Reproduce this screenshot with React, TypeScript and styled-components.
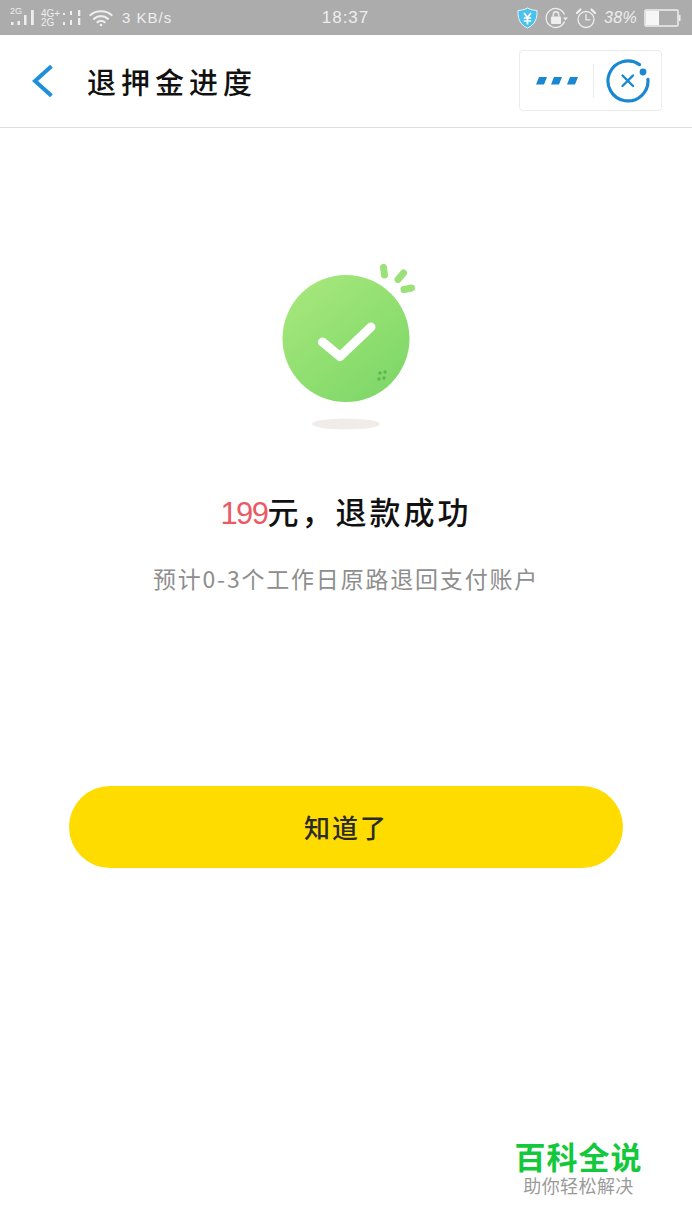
import React from "react";
import styled, { createGlobalStyle } from "styled-components";

const CJK = `"Noto Sans CJK SC", "Noto Sans", sans-serif`;

const Global = createGlobalStyle`
  html, body { margin: 0; padding: 0; background: #fff; }
  body { font-family: ${CJK}; }
`;

const Page = styled.div`
  position: relative;
  width: 692px;
  height: 1230px;
  background: #fff;
  overflow: hidden;
  display: flex;
  flex-direction: column;
`;

const StatusBar = styled.div`
  height: 35px;
  background: #acacac;
  color: #eee;
  display: grid;
  grid-template-columns: 1fr auto 1fr;
  align-items: center;
  padding: 0 11px 0 10px;
  flex: none;
`;

const StatusLeft = styled.div`
  display: flex;
  align-items: center;
  gap: 6px;
  min-width: 0;
`;

const StatusRight = styled.div`
  display: flex;
  align-items: center;
  justify-content: flex-end;
  gap: 7px;
  min-width: 0;
`;

const SignalCell = styled.div`
  position: relative;
  display: flex;
  width: 25px;
  height: 20px;
`;

const CornerLabel = styled.span`
  position: absolute;
  left: 0;
  top: -2px;
  font: 9px/10px "Liberation Sans", sans-serif;
  color: #eee;
`;

const NetStack = styled.div`
  display: flex;
  align-items: center;
  gap: 1px;
`;

const NetLabel = styled.div`
  font: 10px/9px "Liberation Sans", sans-serif;
  width: 20px;
  color: #eee;
`;

const Speed = styled.span`
  margin-left: 3px;
  font-family: "Liberation Sans", sans-serif;
  font-size: 15px;
  letter-spacing: 1px;
  color: #eee;
  white-space: nowrap;
`;

const Clock = styled.span`
  font-family: "Liberation Sans", sans-serif;
  font-size: 17px;
  letter-spacing: 1px;
  color: #eee;
  white-space: nowrap;
`;

const BatteryText = styled.span`
  font-family: "Liberation Sans", sans-serif;
  font-size: 16px;
  font-style: italic;
  letter-spacing: 0.3px;
  color: #eee;
  white-space: nowrap;
`;

const NavBar = styled.div`
  height: 93px;
  flex: none;
  box-sizing: border-box;
  border-bottom: 1px solid #dedede;
  display: flex;
  align-items: center;
  padding: 0 30px 1px 31px;
`;

const BackButton = styled.div`
  width: 24px;
  display: flex;
  align-items: center;
`;

const Title = styled.h1`
  margin: 0 0 0 32px;
  flex: 1;
  font-size: 29px;
  line-height: 40px;
  font-weight: 500;
  letter-spacing: 5px;
  color: #111;
`;

const Capsule = styled.div`
  width: 143px;
  height: 61px;
  box-sizing: border-box;
  border: 1px solid #ececec;
  border-radius: 4px;
  display: flex;
  align-items: center;
`;

const CapsuleCell = styled.div<{ $divider?: boolean }>`
  flex: ${(p) => (p.$divider ? "0 0 73px" : "1")};
  height: 34px;
  display: flex;
  align-items: center;
  justify-content: center;
  border-right: ${(p) => (p.$divider ? "1px solid #ececec" : "none")};
`;

const Main = styled.main`
  flex: 1;
  display: flex;
  flex-direction: column;
  align-items: center;
  padding-top: 131px;
`;

const Illustration = styled.svg`
  display: block;
  width: 180px;
  height: 176px;
  flex: none;
`;

const Heading = styled.h2`
  margin: 54px 0 0;
  font-size: 31px;
  line-height: 44px;
  font-weight: 500;
  letter-spacing: 3px;
  color: #111;
  white-space: nowrap;
`;

const Amount = styled.span`
  color: #ea5a64;
  font-family: "Liberation Sans", sans-serif;
  font-weight: 400;
  font-size: 31px;
  letter-spacing: -1.5px;
`;

const Sub = styled.p`
  margin: 26px 0 0;
  font-size: 23px;
  line-height: 32px;
  letter-spacing: 1.8px;
  color: #8e8e8e;
  white-space: nowrap;
`;

const PrimaryButton = styled.button`
  margin-top: 192px;
  width: 554px;
  height: 82px;
  border: 0;
  border-radius: 41px;
  background: #ffdc00;
  font-family: ${CJK};
  font-size: 26px;
  font-weight: 500;
  letter-spacing: 2px;
  color: #2b2b2b;
  padding: 0 0 2px;
`;

const Watermark = styled.div`
  position: absolute;
  left: 516px;
  top: 1139px;
  width: 125px;
  display: flex;
  flex-direction: column;
  align-items: center;
`;

const WatermarkTitle = styled.div`
  font-size: 31px;
  line-height: 34px;
  font-weight: 700;
  letter-spacing: 1px;
  color: #14c83c;
  white-space: nowrap;
`;

const WatermarkSub = styled.div`
  font-size: 18px;
  line-height: 24px;
  letter-spacing: 0.4px;
  color: #9a9a9a;
  white-space: nowrap;
`;

const SignalOne = () => (
  <svg width="25" height="20" viewBox="0 0 25 20" fill="#eee">
    <rect x="1" y="14" width="2.500" height="3" />
    <rect x="7.500" y="13" width="2.500" height="4" />
    <rect x="14" y="7" width="2.500" height="10" />
    <rect x="21" y="2" width="2.800" height="15" />
  </svg>
);

const SignalTwo = () => (
  <svg width="21" height="20" viewBox="0 0 21 20" fill="#eee">
    <rect x="1" y="5" width="2" height="2" />
    <rect x="1" y="14" width="2" height="3" />
    <rect x="8" y="3" width="2" height="4" />
    <rect x="8" y="12" width="2" height="5" />
    <rect x="16" y="2" width="2.300" height="6" />
    <rect x="16" y="10" width="2.300" height="7" />
  </svg>
);

const Wifi = () => (
  <svg width="24" height="18" viewBox="0 0 24 18" fill="none" stroke="#eee" strokeWidth="2.200" strokeLinecap="round">
    <path d="M1.500 6C7 1 17 1 22.500 6" />
    <path d="M5 9.800C9 6.300 15 6.300 19 9.800" />
    <path d="M8.500 13.200C10.500 11.500 13.500 11.500 15.500 13.200" />
    <circle cx="12" cy="16" r="1.300" fill="#eee" stroke="none" />
  </svg>
);

const Shield = () => (
  <svg width="21" height="22" viewBox="0 0 21 22">
    <path d="M10.500 1C14 3 17 3.200 20 3.500C20.500 11 18 18 10.500 21C3 18 .5 11 1 3.500C4 3.200 7 3 10.500 1Z" fill="#49c3ee" stroke="#e9f6fb" strokeWidth="1" />
    <path d="M7 6L10.500 10.500L14 6M6.800 11H14.200M6.800 14H14.200M10.500 10.500V17.500" fill="none" stroke="#fff" strokeWidth="1.700" />
  </svg>
);

const LockRotate = () => (
  <svg width="23" height="22" viewBox="0 0 23 22" fill="none">
    <path d="M19.500 14.500A9.500 9.500 0 1 1 19.500 7.500" stroke="#eee" strokeWidth="1.300" />
    <rect x="6" y="9.500" width="10" height="7.500" rx="1" fill="#eee" />
    <path d="M8.300 9.500V7.500a2.700 2.700 0 0 1 5.400 0V9.500" stroke="#eee" strokeWidth="1.400" />
    <path d="M18 10.500H23L20.500 13.500Z" fill="#eee" />
  </svg>
);

const Alarm = () => (
  <svg width="22" height="22" viewBox="0 0 22 22" fill="none" stroke="#eee" strokeWidth="1.300" strokeLinecap="round">
    <circle cx="11" cy="12.500" r="8" />
    <path d="M11 7.500V12.800H15" />
    <path d="M2 6L5.500 2.500M20 6L16.500 2.500" strokeWidth="2.200" />
  </svg>
);

const Battery = () => (
  <svg width="37" height="18" viewBox="0 0 37 18">
    <rect x="1" y="1" width="33" height="16" rx="1" fill="none" stroke="#eee" strokeWidth="1.500" />
    <rect x="2" y="2" width="13" height="14" fill="#f6f6f6" />
    <rect x="35" y="6" width="1.500" height="6" fill="#eee" />
  </svg>
);

const Chevron = () => (
  <svg width="22" height="32" viewBox="0 0 22 32" fill="none" stroke="#1f8fdc" strokeWidth="4" strokeLinecap="square">
    <path d="M19 2.500L4 16L19 29.500" />
  </svg>
);

const Dots = () => (
  <svg width="42" height="8" viewBox="0 0 42 8" fill="#1a87d2">
    <path d="M3 0H11L8 7.500H0Z" />
    <path d="M18 0H26L23 7.500H15Z" />
    <path d="M34 0H42L39 7.500H31Z" />
  </svg>
);

const CloseMini = () => (
  <svg width="44" height="44" viewBox="0 0 44 44" fill="none" stroke="#1a87d2" strokeLinecap="round">
    <path d="M33.500 5.600A20 20 0 1 0 41.900 20.300" strokeWidth="3.200" />
    <circle cx="37" cy="13" r="3.400" fill="#1a87d2" stroke="none" />
    <path d="M16.500 16.500L27 27M27 16.500L16.500 27" strokeWidth="2.400" />
  </svg>
);

export default function App() {
  return (
    <Page>
      <Global />
      <StatusBar>
        <StatusLeft>
          <SignalCell>
            <CornerLabel>2G</CornerLabel>
            <SignalOne />
          </SignalCell>
          <NetStack>
            <NetLabel>4G+<br />2G</NetLabel>
            <SignalTwo />
          </NetStack>
          <Wifi />
          <Speed>3 KB/s</Speed>
        </StatusLeft>
        <Clock>18:37</Clock>
        <StatusRight>
          <Shield />
          <LockRotate />
          <Alarm />
          <BatteryText>38%</BatteryText>
          <Battery />
        </StatusRight>
      </StatusBar>
      <NavBar>
        <BackButton><Chevron /></BackButton>
        <Title>退押金进度</Title>
        <Capsule>
          <CapsuleCell $divider><Dots /></CapsuleCell>
          <CapsuleCell><CloseMini /></CapsuleCell>
        </Capsule>
      </NavBar>
      <Main>
        <Illustration viewBox="-4 0 180 176">
          <defs>
            <linearGradient id="ball" x1="0.2" y1="0.1" x2="0.85" y2="0.9">
              <stop offset="0" stopColor="#a3e67a" />
              <stop offset="1" stopColor="#7fd868" />
            </linearGradient>
          </defs>
          <circle cx="86" cy="79.500" r="63.500" fill="url(#ball)" />
          <path d="M62.500 83L80 97.500L111 68" fill="none" stroke="#fff" strokeWidth="9" strokeLinecap="round" strokeLinejoin="round" />
          <g fill="#5fb455">
            <circle cx="120" cy="114" r="1.700" />
            <circle cx="125" cy="113" r="1.700" />
            <circle cx="119" cy="120" r="1.700" />
            <circle cx="124" cy="119" r="1.700" />
          </g>
          <g fill="none" stroke="#9be079" strokeWidth="7" strokeLinecap="round">
            <path d="M123.500 8.500L124.500 16" />
            <path d="M143.500 14L138 20.500" />
            <path d="M151.500 29L144 30.500" />
          </g>
          <ellipse cx="86" cy="165" rx="34" ry="5.500" fill="#efecea" />
        </Illustration>
        <Heading><Amount>199</Amount>元，退款成功</Heading>
        <Sub>预计0-3个工作日原路退回支付账户</Sub>
        <PrimaryButton>知道了</PrimaryButton>
      </Main>
      <Watermark>
        <WatermarkTitle>百科全说</WatermarkTitle>
        <WatermarkSub>助你轻松解决</WatermarkSub>
      </Watermark>
    </Page>
  );
}
